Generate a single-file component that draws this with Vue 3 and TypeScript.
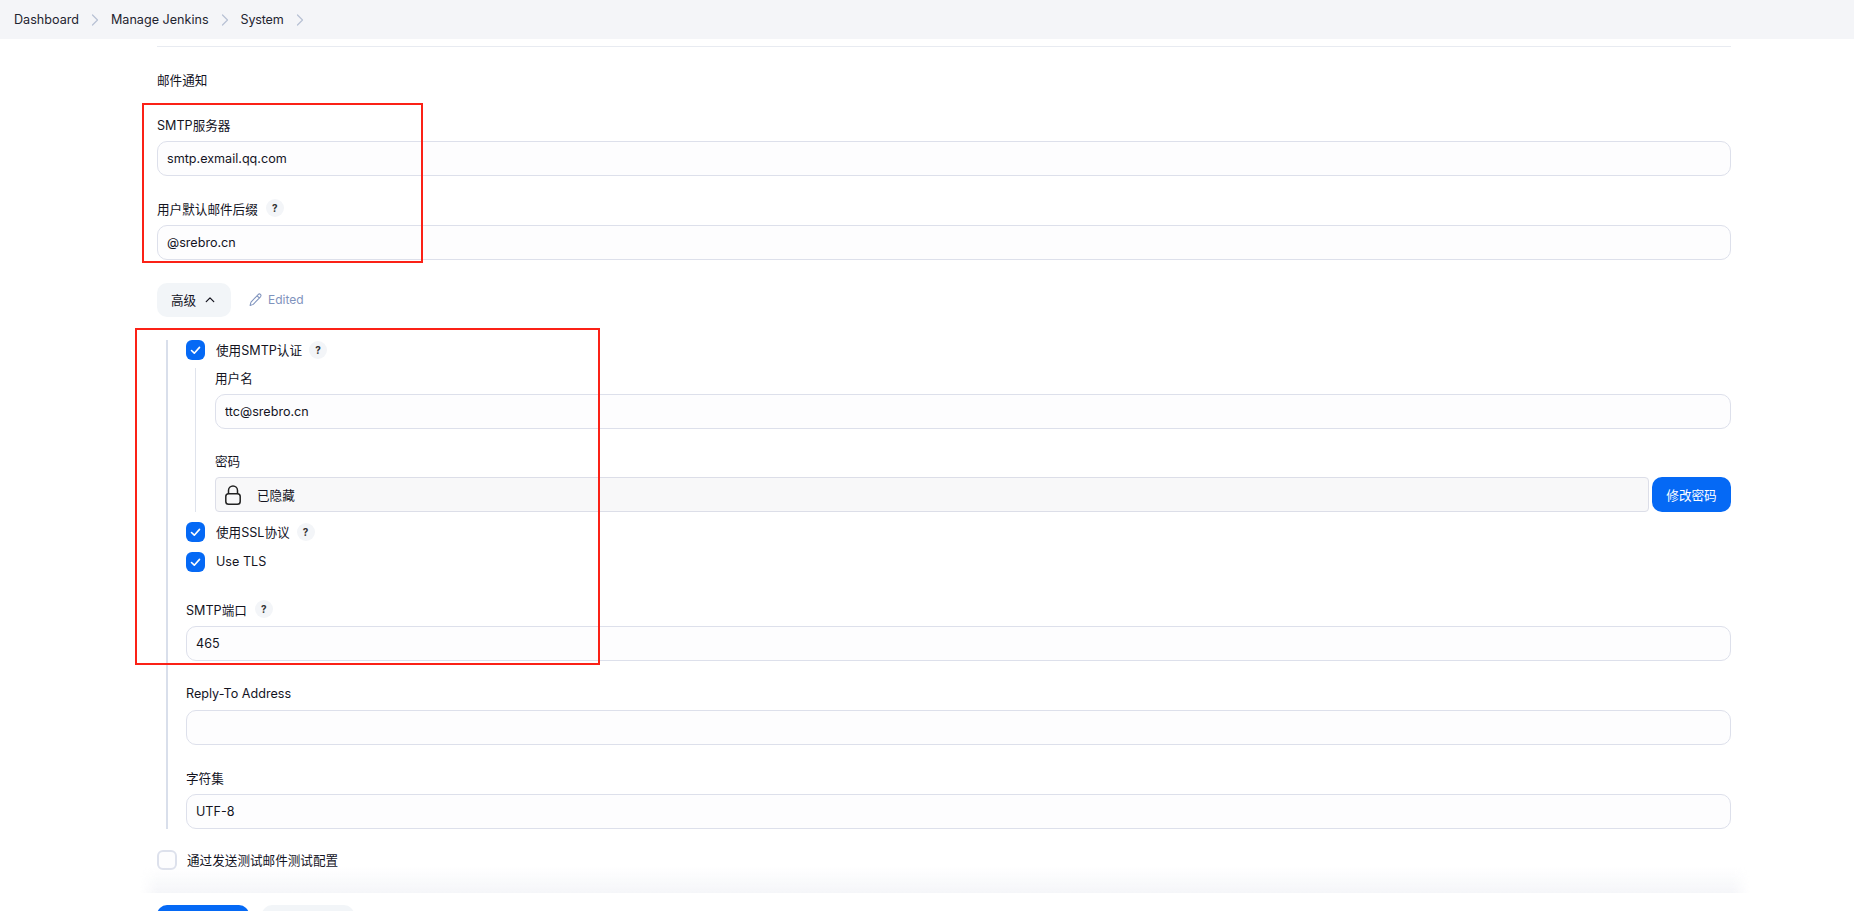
<script setup lang="ts">
const crumbs = ['Dashboard', 'Manage Jenkins', 'System']
</script>

<template>
  <div class="page">
    <header class="crumbs">
      <template v-for="c in crumbs" :key="c">
        <span class="crumb">{{ c }}</span>
        <svg class="sep" viewBox="0 0 8 12" width="8" height="12">
          <path d="M1.500 1 6.500 6l-5 5" fill="none" stroke="#b7c1d4" stroke-width="1.200" stroke-linecap="round" stroke-linejoin="round" />
        </svg>
      </template>
    </header>

    <main class="form">
      <div class="rule"></div>
      <div class="section-title">邮件通知</div>

      <div class="field first">
        <label class="label">SMTP服务器</label>
        <input class="input" value="smtp.exmail.qq.com" />
      </div>
      <div class="field">
        <label class="label">用户默认邮件后缀 <span class="help">?</span></label>
        <input class="input" value="@srebro.cn" />
      </div>

      <div class="advanced-row">
        <button class="advanced">
          高级
          <svg viewBox="0 0 12 8" width="10" height="7">
            <path d="M1.500 6.500 6 2l4.500 4.500" fill="none" stroke="#14141f" stroke-width="1.500" stroke-linecap="round" stroke-linejoin="round" />
          </svg>
        </button>
        <span class="edited">
          <svg viewBox="0 0 16 16" width="15" height="15">
            <path d="M3.200 10.800 10.800 2.700c.8-.8 1.800-.8 2.500-.1s.7 1.700 0 2.500L5.600 13.200 2.200 14.300zM9.600 4l3 2.700" fill="none" stroke="#7f93bd" stroke-width="1.100" stroke-linejoin="round" />
          </svg>
          Edited
        </span>
      </div>

      <div class="adv-body">
        <div class="check">
          <span class="box on"><svg viewBox="0 0 20 20" width="20" height="20"><path d="m5.500 10.500 2.800 2.700L13.500 7.400" fill="none" stroke="#fff" stroke-width="1.600" stroke-linecap="round" stroke-linejoin="round" /></svg></span>
          <span class="check-text">使用SMTP认证</span>
          <span class="help">?</span>
        </div>

        <div class="nested">
          <div class="field nested-first">
            <label class="label">用户名</label>
            <input class="input" value="ttc@srebro.cn" />
          </div>
          <div class="field nested-second">
            <label class="label">密码</label>
            <div class="secret">
              <div class="hidden-box">
                <svg class="lock" viewBox="0 0 16 20" width="16" height="20">
                  <path d="M3.500 9V5.500a4.500 4.500 0 0 1 9 0V9" fill="none" stroke="#222" stroke-width="1.500" />
                  <rect x="0.800" y="8.700" width="14.400" height="10.500" rx="2.800" fill="none" stroke="#222" stroke-width="1.500" />
                </svg>
                <span>已隐藏</span>
              </div>
              <button class="change">修改密码</button>
            </div>
          </div>
        </div>

        <div class="check ssl">
          <span class="box on"><svg viewBox="0 0 20 20" width="20" height="20"><path d="m5.500 10.500 2.800 2.700L13.500 7.400" fill="none" stroke="#fff" stroke-width="1.600" stroke-linecap="round" stroke-linejoin="round" /></svg></span>
          <span class="check-text">使用SSL协议</span>
          <span class="help">?</span>
        </div>
        <div class="check tls">
          <span class="box on"><svg viewBox="0 0 20 20" width="20" height="20"><path d="m5.500 10.500 2.800 2.700L13.500 7.400" fill="none" stroke="#fff" stroke-width="1.600" stroke-linecap="round" stroke-linejoin="round" /></svg></span>
          <span class="check-text">Use TLS</span>
        </div>

        <div class="field port">
          <label class="label">SMTP端口 <span class="help">?</span></label>
          <input class="input" value="465" />
        </div>
        <div class="field">
          <label class="label">Reply-To Address</label>
          <input class="input" value="" />
        </div>
        <div class="field">
          <label class="label">字符集</label>
          <input class="input" value="UTF-8" />
        </div>
      </div>

      <div class="check test">
        <span class="box"></span>
        <span class="check-text">通过发送测试邮件测试配置</span>
      </div>
    </main>

    <div class="fade"></div>
    <footer class="bottom">
      <button class="save" aria-label="Save"></button>
      <button class="apply" aria-label="Apply"></button>
    </footer>

    <div class="mark mark-a"></div>
    <div class="mark mark-b"></div>
  </div>
</template>

<style>
html,
body {
  margin: 0;
  background: #fff;
  overflow: hidden;
}
</style>

<style scoped>
.page {
  position: relative;
  height: 911px;
  overflow: hidden;
  font-family: Inter, "Noto Sans CJK SC", sans-serif;
  font-size: 12.6px;
  color: #14141f;
  background: #fff;
}
.crumbs {
  height: 39px;
  display: flex;
  align-items: center;
  padding-left: 14px;
  background: #f4f5f8;
}
.crumb {
  color: #1f2430;
}
.crumb:last-of-type {
  letter-spacing: -0.2px;
}
.sep {
  margin: 0 12px;
}
.form {
  padding: 0 123px 0 157px;
}
.rule {
  height: 1px;
  margin-top: 7px;
  background: #e8ebf1;
}
.section-title {
  margin-top: 24px;
  line-height: 20px;
}
.field {
  margin-top: 23px;
  display: flex;
  flex-direction: column;
}
.field.first {
  margin-top: 24px;
}
.label {
  display: flex;
  align-items: center;
  gap: 8px;
  height: 18px;
  margin-bottom: 8px;
}
.input {
  display: block;
  width: 100%;
  box-sizing: border-box;
  height: 35px;
  padding: 0 9px;
  border: 1.500px solid #dde0eb;
  border-radius: 10px;
  background: #fdfdfe;
  font: inherit;
  color: inherit;
  outline: none;
}
.help {
  display: inline-flex;
  align-items: center;
  justify-content: center;
  width: 18px;
  height: 18px;
  border-radius: 50%;
  background: #f3f5f8;
  font-size: 10px;
  font-weight: 700;
  color: #333;
}
.advanced-row {
  display: flex;
  align-items: center;
  margin-top: 23px;
  height: 34px;
}
.advanced {
  display: flex;
  align-items: center;
  gap: 9px;
  box-sizing: border-box;
  width: 74px;
  height: 34px;
  padding: 0 0 2px 14px;
  border: none;
  border-radius: 10px;
  background: #f2f5f8;
  font: inherit;
  color: inherit;
}
.edited {
  display: flex;
  align-items: center;
  gap: 5px;
  margin-left: 17px;
  padding-bottom: 1px;
  font-size: 12px;
  color: #7f93bd;
}
.adv-body {
  margin-top: 23px;
  margin-left: 9px;
  padding-left: 18px;
  border-left: 2px solid #d9dfeb;
}
.check {
  display: flex;
  align-items: center;
  height: 20px;
  gap: 11px;
}
.check-text {
  padding-bottom: 2px;
}
.check .help {
  margin-left: -4px;
}
.box {
  flex: none;
  width: 19px;
  height: 20px;
  box-sizing: border-box;
  border: 2px solid #dde1ec;
  border-radius: 6px;
  background: #fdfdfe;
}
.box.on {
  border: none;
  background: #0569f5;
}
.box svg {
  display: block;
}
.test .box {
  width: 20px;
}
.nested {
  margin-top: 8px;
  margin-left: 9px;
  padding-left: 19px;
  border-left: 1px solid #dfe3ec;
  height: 144px;
}
.field.nested-first {
  margin-top: 0;
}
.field.nested-second {
  margin-top: 22px;
}
.secret {
  display: flex;
  gap: 3px;
}
.hidden-box {
  flex: 1;
  display: flex;
  align-items: center;
  gap: 16px;
  box-sizing: border-box;
  height: 35px;
  padding-left: 9px;
  border: 1.500px solid #dcdee8;
  border-radius: 4px;
  background: #f8f8f9;
}
.change {
  flex: none;
  width: 79px;
  height: 35px;
  padding: 0;
  border: none;
  border-radius: 10px;
  background: #0569f5;
  color: #fff;
  font: inherit;
}
.ssl {
  margin-top: 10px;
}
.tls {
  margin-top: 10px;
}
.field.port {
  margin-top: 28px;
}
.test {
  margin-top: 21px;
  gap: 10px;
}
.fade {
  position: absolute;
  left: 140px;
  right: 104px;
  top: 867px;
  height: 26px;
  background: linear-gradient(to bottom, rgba(245, 246, 249, 0), #f5f6f9);
  -webkit-mask-image: linear-gradient(to right, transparent, #000 18px, #000 calc(100% - 18px), transparent);
  mask-image: linear-gradient(to right, transparent, #000 18px, #000 calc(100% - 18px), transparent);
}
.bottom {
  position: absolute;
  left: 157px;
  top: 905px;
  display: flex;
  gap: 13px;
}
.save,
.apply {
  width: 92px;
  height: 38px;
  border: none;
  border-radius: 10px;
  font: inherit;
}
.save {
  background: #0569f5;
  color: #fff;
}
.apply {
  background: #f2f5f8;
}
.mark {
  position: absolute;
  box-sizing: border-box;
  border: 2px solid #fb2116;
  pointer-events: none;
}
.mark-a {
  left: 142px;
  top: 103px;
  width: 281px;
  height: 160px;
}
.mark-b {
  left: 135px;
  top: 328px;
  width: 465px;
  height: 337px;
}
</style>
